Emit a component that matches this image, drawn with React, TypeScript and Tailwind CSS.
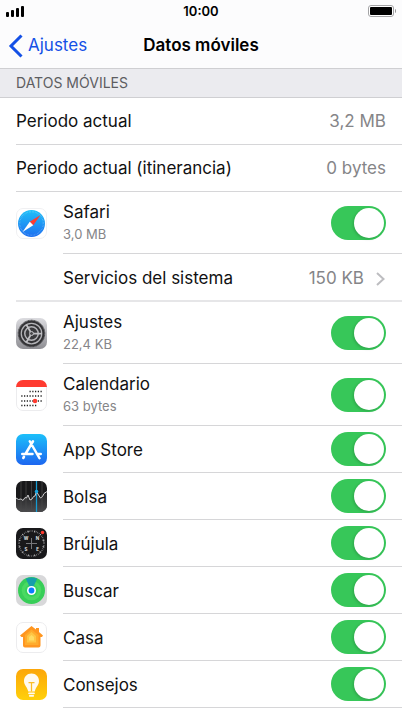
import { useState, type ReactNode } from "react";

const DEGREES = [0, 30, 60, 90, 120, 150, 180, 210, 240, 270, 300, 330];

function SafariIcon() {
  return (
    <svg viewBox="0 0 62 62" className="size-[31px] shrink-0" aria-hidden="true">
      <defs>
        <linearGradient id="safari" x1="0" y1="0" x2="0" y2="1">
          <stop offset="0" stopColor="#1fc0f8" />
          <stop offset="1" stopColor="#1d6ff0" />
        </linearGradient>
      </defs>
      <rect x="1" y="1" width="60" height="60" rx="13" fill="#fff" stroke="#f0f0f2" strokeWidth="2" />
      <circle cx="31" cy="31" r="27" fill="url(#safari)" />
      <circle cx="31" cy="31" r="23.5" fill="none" stroke="#fff" strokeOpacity="0.35" strokeWidth="2.5" strokeDasharray="1 2" />
      <path d="M49 14 34.500 34.500 27.500 27.500Z" fill="#ff3b30" />
      <path d="M13 48 27.500 27.500 34.500 34.500Z" fill="#fff" />
    </svg>
  );
}

function SettingsIcon() {
  return (
    <svg viewBox="0 0 62 62" className="size-[31px] shrink-0" aria-hidden="true">
      <defs>
        <linearGradient id="settings" x1="0" y1="0" x2="0" y2="1">
          <stop offset="0" stopColor="#dcdce0" />
          <stop offset="1" stopColor="#8e8e93" />
        </linearGradient>
      </defs>
      <rect width="62" height="62" rx="14" fill="url(#settings)" />
      <circle cx="31" cy="31" r="26.500" fill="none" stroke="#333336" strokeWidth="2" strokeDasharray="2 1" />
      <circle cx="31" cy="31" r="26" fill="#333336" />
      <circle cx="31" cy="31" r="20.500" fill="none" stroke="#b4b4b8" strokeWidth="2.500" />
      <circle cx="31" cy="31" r="13.500" fill="#3b3b3e" stroke="#b4b4b8" strokeWidth="3" />
      <path d="M31 31H52M31 31 20.500 13M31 31 20.500 49" stroke="#c0c0c4" strokeWidth="3.500" />
      <circle cx="31" cy="31" r="4" fill="#4b4b4e" stroke="#c0c0c4" strokeWidth="2" />
    </svg>
  );
}

const CALENDAR_ROWS = [
  { y: 23, from: 3, to: 8 },
  { y: 32, from: 0, to: 8 },
  { y: 42, from: 0, to: 8 },
  { y: 51, from: 0, to: 6 },
];

function CalendarIcon() {
  return (
    <svg viewBox="0 0 62 62" className="size-[31px] shrink-0" aria-hidden="true">
      <rect x="1" y="1" width="60" height="60" rx="13" fill="#fff" stroke="#ececee" strokeWidth="2" />
      <path d="M0 14A14 14 0 0 1 14 0H48A14 14 0 0 1 62 14Z" fill="#ff3b30" />
      {CALENDAR_ROWS.map((row) =>
        Array.from({ length: row.to - row.from }, (_, i) => (
          <rect key={`${row.y}-${i}`} x={10.5 + (row.from + i) * 5.5} y={row.y - 1.5} width="2.500" height="3" fill="#222" />
        )),
      )}
      <circle cx="38" cy="42" r="4.500" fill="#ff3b30" />
    </svg>
  );
}

function AppStoreIcon() {
  return (
    <svg viewBox="0 0 62 62" className="size-[31px] shrink-0" aria-hidden="true">
      <defs>
        <linearGradient id="appstore" x1="0" y1="0" x2="0" y2="1">
          <stop offset="0" stopColor="#1cc0fa" />
          <stop offset="1" stopColor="#1d66f0" />
        </linearGradient>
      </defs>
      <rect width="62" height="62" rx="14" fill="url(#appstore)" />
      <g stroke="#fff" strokeWidth="5" strokeLinecap="round" fill="none">
        <path d="M34 14.500 19.500 39M27.500 14.500 47 48.500M16 45.500 14.500 48M12.500 40H33M43 40H49.500" />
      </g>
    </svg>
  );
}

function StocksIcon() {
  return (
    <svg viewBox="0 0 62 62" className="size-[31px] shrink-0" aria-hidden="true">
      <defs>
        <linearGradient id="stocks" x1="0" y1="0" x2="0" y2="1">
          <stop offset="0" stopColor="#3c3c3e" stopOpacity="0.300" />
          <stop offset="1" stopColor="#4c4c4e" />
        </linearGradient>
      </defs>
      <rect width="62" height="62" rx="14" fill="#18181a" />
      <path d="M0 34 6 37 12 39 18 34 23 28 28 38 34 32 41 20 46 31 50 34 55 26 62 21V48A14 14 0 0 1 48 62H14A14 14 0 0 1 0 48Z" fill="url(#stocks)" />
      <path d="M10 1V61M20 0V62M31 0V62M52 1V61" stroke="#48484a" strokeWidth="1.500" />
      <path d="M41 0V62" stroke="#159bd3" strokeWidth="2.500" />
      <path d="M0 34 5 37 10 36 14 39 18 33 21 34 24 28 28 38 32 36 35 31 38 30 41 21 45 28 49 34 53 31 56 25 62 21" fill="none" stroke="#c9c9cb" strokeWidth="2" />
      <circle cx="41" cy="21" r="3.500" fill="#18a6e2" />
    </svg>
  );
}

function CompassIcon() {
  return (
    <svg viewBox="0 0 62 62" className="size-[31px] shrink-0" aria-hidden="true">
      <rect width="62" height="62" rx="14" fill="#19191b" />
      <circle cx="31" cy="31" r="25" fill="none" stroke="#a5a5a8" strokeWidth="3" strokeDasharray="1 2.500" />
      {DEGREES.map((angle) => (
        <path key={angle} d="M31 4.500V8" stroke="#d5d5d7" strokeWidth="1.500" transform={`rotate(${angle + 15} 31 31)`} />
      ))}
      <path d="M31 20V42M20 31H42" stroke="#77777a" strokeWidth="2" />
      <g fill="#e2e2e4" fontSize="9" fontWeight="700" textAnchor="middle" className="font-['Inter',sans-serif]">
        <text x="20" y="23">W</text>
        <text x="43" y="23">N</text>
        <text x="20" y="46">S</text>
        <text x="43" y="46">E</text>
      </g>
      <circle cx="53" cy="9" r="3.500" fill="#ff3b30" />
    </svg>
  );
}

function FindIcon() {
  return (
    <svg viewBox="0 0 62 62" className="size-[31px] shrink-0" aria-hidden="true">
      <rect width="62" height="62" rx="14" fill="#d8d8da" />
      <circle cx="31" cy="31" r="27" fill="#37ce58" />
      <circle cx="31" cy="31" r="19.500" fill="#4bd962" />
      <circle cx="31" cy="31" r="13" fill="#36d45a" />
      <path d="M31 31 19.500 7.500Q31 2 42.500 7.500Z" fill="#169eaa" />
      <circle cx="31" cy="31" r="9" fill="#fff" />
      <circle cx="31" cy="31" r="5.800" fill="#0a7cff" />
    </svg>
  );
}

function HomeIcon() {
  return (
    <svg viewBox="0 0 62 62" className="size-[31px] shrink-0" aria-hidden="true">
      <rect x="1" y="1" width="60" height="60" rx="13" fill="#fff" stroke="#ececee" strokeWidth="2" />
      <path d="M31 8 40 15V12H46V20L54 27 52 30H49V47Q49 51 45 51H18Q14 51 14 47V30H11L8 27Z" fill="#ff9620" />
      <path d="M31 15 45 26V46H18V26Z" fill="#ffab2c" />
      <path d="M31 20 40 28V41H22V28Z" fill="#ffc544" />
      <path d="M31 26 36 30V37H26V30Z" fill="#ffdc62" />
    </svg>
  );
}

function TipsIcon() {
  return (
    <svg viewBox="0 0 62 62" className="size-[31px] shrink-0" aria-hidden="true">
      <defs>
        <linearGradient id="tips" x1="0" y1="0" x2="0" y2="1">
          <stop offset="0" stopColor="#fca60a" />
          <stop offset="1" stopColor="#ffd00a" />
        </linearGradient>
      </defs>
      <rect width="62" height="62" rx="14" fill="url(#tips)" />
      <path d="M31 9C22 9 16 15.500 16 24 16 32 22 35 24.500 45H37.500C40 35 46 32 46 24 46 15.500 40 9 31 9Z" fill="#fffaf0" />
      <path d="M26 48.500H36M27.500 53.500H34.500" stroke="#fffaf0" strokeWidth="3.500" strokeLinecap="round" />
      <path d="M25 27H37M31 27V45" stroke="#fbbd28" strokeWidth="2.500" />
    </svg>
  );
}

function Toggle({ id, label }: { id: string; label: string }) {
  const [on, setOn] = useState(true);
  return (
    <input
      id={id}
      type="checkbox"
      role="switch"
      aria-label={label}
      checked={on}
      onChange={() => setOn(!on)}
      className="h-[34px] w-[55px] shrink-0 appearance-none rounded-full bg-[#e9e9eb] p-0.5 before:block before:size-[30px] before:rounded-full before:bg-white before:shadow-[-1px_1px_3px_rgba(0,0,0,0.18)] before:content-[''] checked:bg-[#37c759] checked:pl-[23px]"
    />
  );
}

function AppRow({ id, name, usage, icon }: { id: string; name: string; usage?: string; icon: ReactNode }) {
  return (
    <li className={`flex items-center gap-4 pl-4 ${usage ? "h-[62px]" : "h-[47px]"}`}>
      {icon}
      <div className="flex h-full flex-1 items-center justify-between border-b border-[#d6d6d8] pr-4">
        <label htmlFor={id} className={`flex flex-col ${usage ? "pb-0.5" : "pt-0.5"}`}>
          <span className="leading-6">{name}</span>
          {usage && <span className="text-[13px] leading-5 text-[#858588]">{usage}</span>}
        </label>
        <Toggle id={id} label={name} />
      </div>
    </li>
  );
}

function SummaryRow({ label, value }: { label: string; value: string }) {
  return (
    <li className="pl-4">
      <div className="flex h-[47px] items-center justify-between border-b border-[#d6d6d8] pr-4 pt-0.5">
        <span>{label}</span>
        <span className="text-[#858588]">{value}</span>
      </div>
    </li>
  );
}

function StatusBar() {
  return (
    <div className="grid h-[22px] grid-cols-3 items-center px-1.5">
      <svg viewBox="0 0 18 11" className="h-[11px] w-[18px]" aria-label="Cobertura">
        <rect x="0" y="6" width="3" height="5" rx="1" />
        <rect x="5" y="4" width="3" height="7" rx="1" />
        <rect x="10" y="2" width="3" height="9" rx="1" />
        <rect x="15" y="0" width="3" height="11" rx="1" />
      </svg>
      <span className="text-center text-[13px] font-semibold leading-4">10:00</span>
      <svg viewBox="0 0 28 12" className="h-3 w-7 justify-self-end" aria-label="Batería">
        <rect x="0.500" y="0.500" width="25" height="11" rx="2.500" fill="#fff" stroke="#a4a4a6" />
        <rect x="2" y="2" width="22" height="8" rx="1" />
        <path d="M27 4Q28 4 28 6T27 8Z" fill="#8d8d90" />
      </svg>
    </div>
  );
}

export default function App() {
  return (
    <main className="min-h-screen bg-white font-['Inter','Liberation_Sans',sans-serif] text-[17px] text-[#111112]">
      <header className="border-b border-[#cfcfd2] bg-[#fcfcfd] text-black">
        <StatusBar />
        <nav className="grid h-[46px] grid-cols-[1fr_auto_1fr] items-center px-2 pt-0.5">
          <button type="button" className="flex items-center gap-1 justify-self-start text-[#1450e6]">
            <svg viewBox="0 0 16 24" className="h-6 w-4" fill="none" stroke="currentColor" strokeWidth="3" aria-hidden="true">
              <path d="M13.500 1.500 3 12 13.500 22.500" />
            </svg>
            Ajustes
          </button>
          <h1 className="font-semibold">Datos móviles</h1>
        </nav>
      </header>

      <h2 className="flex h-[29px] items-center border-b border-[#cfcfd2] bg-[#ebebef] px-4 pb-0.5 text-[14px] text-[#5d5d61]">
        DATOS MÓVILES
      </h2>

      <ul>
        <SummaryRow label="Periodo actual" value="3,2 MB" />
        <SummaryRow label="Periodo actual (itinerancia)" value="0 bytes" />
        <AppRow id="safari-data" name="Safari" usage="3,0 MB" icon={<SafariIcon />} />
        <li className="pl-4">
          <button type="button" className="flex h-12 w-full items-center border-b-2 border-[#e6e6e8] pl-[47px] pr-4 pt-1 text-left">
            <span className="flex-1">Servicios del sistema</span>
            <span className="text-[#858588]">150 KB</span>
            <svg viewBox="0 0 10 14" className="ml-3 h-3.5 w-2.5" fill="none" stroke="#bdbdc0" strokeWidth="2" aria-hidden="true">
              <path d="M1 1 7.500 7 1 13" />
            </svg>
          </button>
        </li>
        <AppRow id="settings-data" name="Ajustes" usage="22,4 KB" icon={<SettingsIcon />} />
        <AppRow id="calendar-data" name="Calendario" usage="63 bytes" icon={<CalendarIcon />} />
        <AppRow id="appstore-data" name="App Store" icon={<AppStoreIcon />} />
        <AppRow id="stocks-data" name="Bolsa" icon={<StocksIcon />} />
        <AppRow id="compass-data" name="Brújula" icon={<CompassIcon />} />
        <AppRow id="find-data" name="Buscar" icon={<FindIcon />} />
        <AppRow id="home-data" name="Casa" icon={<HomeIcon />} />
        <AppRow id="tips-data" name="Consejos" icon={<TipsIcon />} />
      </ul>
    </main>
  );
}
